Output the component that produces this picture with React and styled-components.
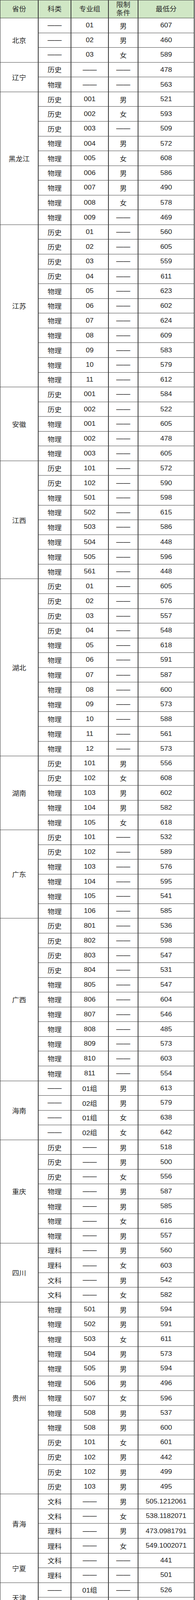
import React from "react";
import styled, { createGlobalStyle } from "styled-components";

const GlobalStyle = createGlobalStyle`
  html, body {
    margin: 0;
    padding: 0;
    background: #ffffff;
  }
  body {
    font-family: "Liberation Sans", "Noto Sans CJK SC", sans-serif;
    color: #222;
  }
`;

const LINE = "#333";

const Table = styled.div`
  display: grid;
  grid-template-columns: 98px 84px 96px 76px 144px;
  grid-template-rows: 49px;
  grid-auto-rows: 40.57px;
  width: 499px;
  box-sizing: border-box;
  border-top: 1px solid ${LINE};
  border-left: 1px solid ${LINE};
  font-size: 18px;
  transform: scaleY(0.93155);
  transform-origin: top left;
`;

const Cell = styled.div`
  display: flex;
  align-items: center;
  justify-content: center;
  text-align: center;
  box-sizing: border-box;
  border-right: 2px solid ${LINE};
  border-bottom: 1px solid ${LINE};
  white-space: nowrap;
  color: #1e1e1e;
`;

const HeadCell = styled(Cell)`
  background: #d0e7c5;
  color: #2a2a2a;
  line-height: 23px;
  flex-direction: column;
`;

const ProvinceCell = styled(Cell)`
  grid-row: span ${({ $span }) => $span};
`;

const Dash = styled.span`
  color: #000;
`;

const D = "——";

const data = [
  ["北京", [[D, "01", "男", "607"], [D, "02", "男", "460"], [D, "03", "女", "589"]]],
  ["辽宁", [["历史", D, D, "478"], ["物理", D, D, "563"]]],
  [
    "黑龙江",
    [
      ["历史", "001", "男", "521"],
      ["历史", "002", "女", "593"],
      ["历史", "003", D, "509"],
      ["物理", "004", "男", "572"],
      ["物理", "005", "女", "608"],
      ["物理", "006", "男", "586"],
      ["物理", "007", "男", "490"],
      ["物理", "008", "女", "578"],
      ["物理", "009", D, "469"],
    ],
  ],
  [
    "江苏",
    [
      ["历史", "01", D, "560"],
      ["历史", "02", D, "605"],
      ["历史", "03", D, "559"],
      ["历史", "04", D, "611"],
      ["物理", "05", D, "623"],
      ["物理", "06", D, "602"],
      ["物理", "07", D, "624"],
      ["物理", "08", D, "609"],
      ["物理", "09", D, "583"],
      ["物理", "10", D, "579"],
      ["物理", "11", D, "612"],
    ],
  ],
  [
    "安徽",
    [
      ["历史", "001", D, "584"],
      ["历史", "002", D, "522"],
      ["物理", "001", D, "605"],
      ["物理", "002", D, "478"],
      ["物理", "003", D, "605"],
    ],
  ],
  [
    "江西",
    [
      ["历史", "101", D, "572"],
      ["历史", "102", D, "590"],
      ["物理", "501", D, "598"],
      ["物理", "502", D, "615"],
      ["物理", "503", D, "586"],
      ["物理", "504", D, "448"],
      ["物理", "505", D, "596"],
      ["物理", "561", D, "448"],
    ],
  ],
  [
    "湖北",
    [
      ["历史", "01", D, "605"],
      ["历史", "02", D, "576"],
      ["历史", "03", D, "557"],
      ["历史", "04", D, "548"],
      ["物理", "05", D, "618"],
      ["物理", "06", D, "591"],
      ["物理", "07", D, "587"],
      ["物理", "08", D, "600"],
      ["物理", "09", D, "573"],
      ["物理", "10", D, "588"],
      ["物理", "11", D, "561"],
      ["物理", "12", D, "573"],
    ],
  ],
  [
    "湖南",
    [
      ["历史", "101", "男", "556"],
      ["历史", "102", "女", "608"],
      ["物理", "103", "男", "602"],
      ["物理", "104", "男", "582"],
      ["物理", "105", "女", "618"],
    ],
  ],
  [
    "广东",
    [
      ["历史", "101", D, "532"],
      ["历史", "102", D, "589"],
      ["物理", "103", D, "576"],
      ["物理", "104", D, "595"],
      ["物理", "105", D, "541"],
      ["物理", "106", D, "585"],
    ],
  ],
  [
    "广西",
    [
      ["历史", "801", D, "536"],
      ["历史", "802", D, "598"],
      ["历史", "803", D, "547"],
      ["历史", "804", D, "531"],
      ["物理", "805", D, "547"],
      ["物理", "806", D, "604"],
      ["物理", "807", D, "546"],
      ["物理", "808", D, "485"],
      ["物理", "809", D, "573"],
      ["物理", "810", D, "603"],
      ["物理", "811", D, "554"],
    ],
  ],
  [
    "海南",
    [
      [D, "01组", "男", "613"],
      [D, "02组", "男", "579"],
      [D, "01组", "女", "638"],
      [D, "02组", "女", "642"],
    ],
  ],
  [
    "重庆",
    [
      ["历史", D, "男", "518"],
      ["历史", D, "男", "500"],
      ["历史", D, "女", "556"],
      ["物理", D, "男", "587"],
      ["物理", D, "男", "585"],
      ["物理", D, "女", "616"],
      ["物理", D, "男", "557"],
    ],
  ],
  [
    "四川",
    [
      ["理科", D, "男", "560"],
      ["理科", D, "女", "603"],
      ["文科", D, "男", "542"],
      ["文科", D, "女", "582"],
    ],
  ],
  [
    "贵州",
    [
      ["物理", "501", "男", "594"],
      ["物理", "502", "男", "591"],
      ["物理", "503", "女", "611"],
      ["物理", "504", "男", "573"],
      ["物理", "505", "男", "594"],
      ["物理", "506", "男", "496"],
      ["物理", "507", "女", "596"],
      ["物理", "508", "男", "537"],
      ["物理", "508", "男", "600"],
      ["历史", "101", "女", "601"],
      ["历史", "102", "男", "442"],
      ["历史", "102", "男", "499"],
      ["历史", "103", "男", "495"],
    ],
  ],
  [
    "青海",
    [
      ["文科", D, "男", "505.1212061"],
      ["文科", D, "女", "538.1182071"],
      ["理科", D, "男", "473.0981791"],
      ["理科", D, "女", "549.1002071"],
    ],
  ],
  ["宁夏", [["文科", D, D, "441"], ["理科", D, D, "501"]]],
  // second Tianjin row runs off the bottom of the picture, its cells stay blank
  ["天津", [[D, "01组", D, "526"], ["", "", "", ""]]],
];

const App = () => {
  return (
    <>
      <GlobalStyle />
      <Table>
        <HeadCell>省份</HeadCell>
        <HeadCell>科类</HeadCell>
        <HeadCell>专业组</HeadCell>
        <HeadCell>
          <span>限制</span>
          <span>条件</span>
        </HeadCell>
        <HeadCell>最低分</HeadCell>
        {data.map(([province, rows]) => (
          <React.Fragment key={province}>
            <ProvinceCell $span={rows.length}>{province}</ProvinceCell>
            {rows.map((row, i) =>
              row.map((value, j) => (
                <Cell key={`${province}-${i}-${j}`}>
                  {value === D ? <Dash>{value}</Dash> : value}
                </Cell>
              ))
            )}
          </React.Fragment>
        ))}
      </Table>
    </>
  );
};

export default App;
